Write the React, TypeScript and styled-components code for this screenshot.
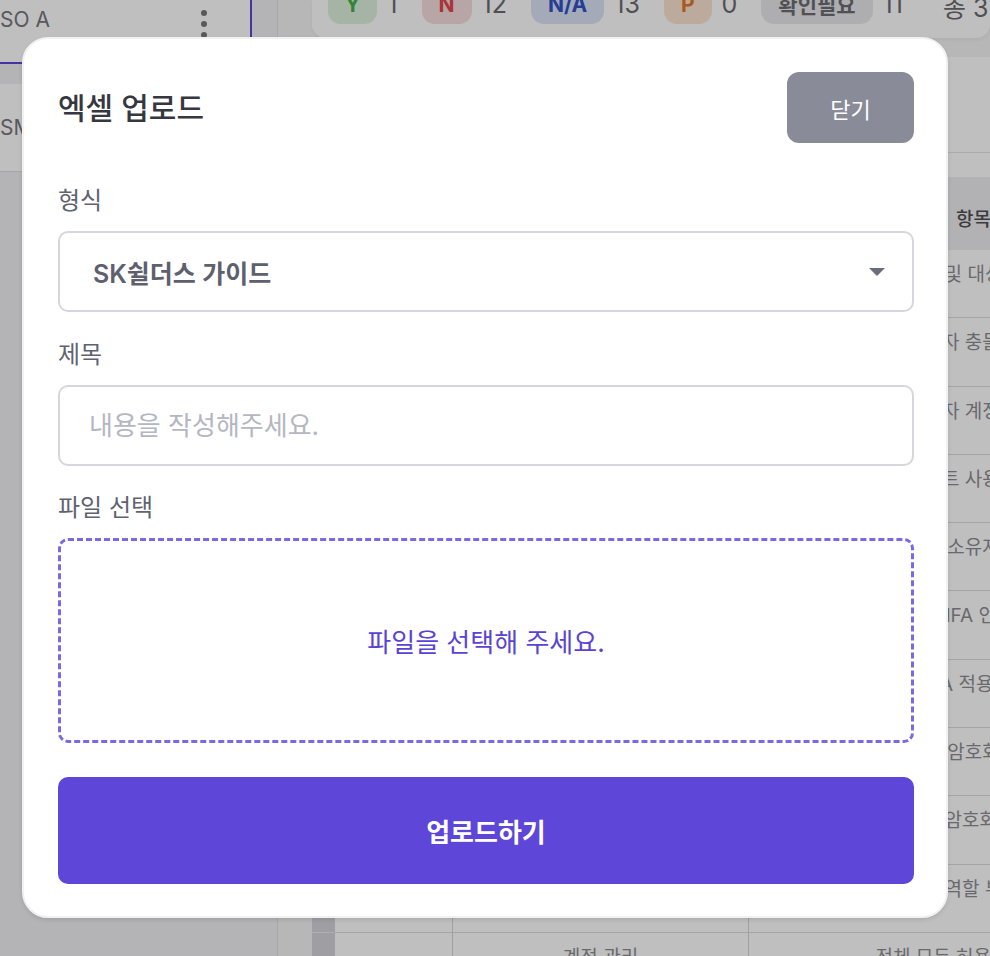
import React from "react";
import styled, { createGlobalStyle } from "styled-components";

const GlobalStyle = createGlobalStyle`
  html, body { margin: 0; padding: 0; background: #f5f5f5; }
  * { box-sizing: border-box; }
  body { font-family: "Inter", "Noto Sans CJK KR", "Noto Sans", sans-serif; }
`;

const FONT = `"Inter", "Noto Sans CJK KR", "Noto Sans", sans-serif`;

const Page = styled.div`
  position: relative;
  width: 990px;
  height: 956px;
  overflow: hidden;
  display: grid;
  grid-template-columns: 278px 1fr;
  background: #f5f5f5;
  font-family: ${FONT};
`;

/* ---------- background app ---------- */
const Sidebar = styled.aside`
  background: #f0f0f3;
  border-right: 1px solid #e0e0e2;
  display: flex;
  flex-direction: column;
  gap: 20px;
`;

const SideItem = styled.div<{ $selected?: boolean; $h: number }>`
  width: 252px;
  height: ${(p) => p.$h}px;
  background: #fff;
  display: flex;
  justify-content: space-between;
  align-items: ${(p) => (p.$selected ? "flex-start" : "center")};
  padding: ${(p) => (p.$selected ? "7px 43px 0 0" : "0 43px 0 0")};
  border-right: ${(p) => (p.$selected ? "2px solid #5b45d8" : "none")};
  border-bottom: ${(p) => (p.$selected ? "2px solid #5b45d8" : "1px solid #dcdcdf")};
  font-size: 21px;
  line-height: 26px;
  color: #77777c;
`;

const Kebab = styled.div`
  display: flex;
  flex-direction: column;
  gap: 5px;
  padding-top: 3px;
  span {
    width: 6px;
    height: 6px;
    border-radius: 50%;
    background: #76767c;
  }
`;

const Main = styled.main`
  display: flex;
  flex-direction: column;
  padding-left: 34px;
  min-width: 0;
`;

const Toolbar = styled.div`
  height: 38px;
  background: #fff;
  border-radius: 0 0 14px 14px;
  display: flex;
  align-items: flex-end;
  gap: 24px;
  padding: 0 0 14px 16px;
  white-space: nowrap;
  box-shadow: 0 2px 4px rgba(0, 0, 0, 0.05);
`;

const Stat = styled.div`
  display: flex;
  align-items: center;
  gap: 10px;
  font-size: 25px;
  color: #6b6b70;
`;

const Badge = styled.span<{ $bg: string; $fg: string }>`
  height: 40px;
  padding: 0 17px;
  border-radius: 13px;
  display: inline-flex;
  align-items: center;
  background: ${(p) => p.$bg};
  color: ${(p) => p.$fg};
  font-weight: 700;
  font-size: 21px;
`;

const Divider = styled.span`
  width: 2px;
  height: 30px;
  background: #dedee2;
  align-self: center;
  margin: -8px -8px 0 0;
`;

const Panel = styled.div`
  margin-top: 19px;
  flex: 1;
  background: #fff;
  display: flex;
  flex-direction: column;
`;

const FilterArea = styled.div`
  height: 96px;
  border-bottom: 1px solid #e4e4e8;
  margin-bottom: 24px;
`;

const Table = styled.div`
  display: grid;
  grid-template-columns: 23px 118px 296px 450px;
  margin-left: -34px;
  padding-left: 34px;
`;

const HeadCell = styled.div`
  height: 73px;
  background: #eeeef0;
  border-right: 1px solid #dcdce0;
  display: flex;
  align-items: center;
  justify-content: center;
  font-size: 19px;
  font-weight: 500;
  color: #505055;
  white-space: nowrap;
  padding-top: 8px;
`;

const Cell = styled.div<{ $strip?: boolean }>`
  height: 68.3px;
  border-bottom: 1px solid #dcdce0;
  border-right: 1px solid #d6d6da;
  background: ${(p) => (p.$strip ? "#d5d5da" : "#fff")};
  border-bottom-color: ${(p) => (p.$strip ? "#e8e8ec" : "#dcdce0")};
  display: flex;
  justify-content: center;
  align-items: flex-start;
  padding-top: 12px;
  font-size: 19px;
  line-height: 26px;
  color: #8d8d92;
  white-space: nowrap;
  overflow: hidden;
`;

const Overlay = styled.div`
  position: absolute;
  inset: 0;
  background: rgba(0, 0, 0, 0.25);
`;

/* ---------- modal ---------- */
const Modal = styled.div`
  position: absolute;
  left: 22px;
  top: 37px;
  width: 926px;
  height: 881px;
  background: #fff;
  border: 2px solid #f1f1f3;
  border-radius: 26px;
  padding: 33px 32px 32px 34px;
  display: flex;
  flex-direction: column;
  box-shadow: 0 2px 4px rgba(0, 0, 0, 0.1);
  font-family: ${FONT};
`;

const Header = styled.div`
  height: 71px;
  display: flex;
  align-items: center;
  justify-content: space-between;
  margin-bottom: 44px;
`;

const Title = styled.h2`
  margin: 0 0 3px;
  font-size: 30px;
  font-weight: 500;
  color: #36373f;
`;

const CloseButton = styled.button`
  width: 127px;
  height: 71px;
  border: none;
  border-radius: 12px;
  background: #8a8b98;
  color: #fff;
  font-family: ${FONT};
  font-size: 22px;
`;

const FieldGroup = styled.div<{ $gap: number }>`
  display: flex;
  flex-direction: column;
  margin-bottom: ${(p) => p.$gap}px;
`;

const Label = styled.label`
  font-size: 24px;
  line-height: 28px;
  color: #5f6270;
  margin-bottom: 16px;
`;

const SelectBox = styled.div`
  height: 81px;
  border: 2px solid #d6d6de;
  border-radius: 10px;
  display: flex;
  align-items: center;
  justify-content: space-between;
  padding: 0 27px 0 33px;
  font-size: 25px;
  font-weight: 600;
  color: #5e606e;
`;

const Caret = styled.span`
  width: 0;
  height: 0;
  border-left: 8px solid transparent;
  border-right: 8px solid transparent;
  border-top: 8px solid #6c6d7b;
`;

const TextInput = styled.input`
  height: 81px;
  border: 2px solid #d6d6de;
  border-radius: 10px;
  padding: 0 29px;
  font-family: ${FONT};
  font-size: 26px;
  color: #333;
  outline: none;
  &::placeholder {
    color: #b4b6c2;
  }
`;

const DropZone = styled.div`
  height: 205px;
  border: 3px dashed #7c68e2;
  border-radius: 10px;
  display: flex;
  align-items: center;
  justify-content: center;
  font-size: 26px;
  color: #5a43d4;
  margin-bottom: 34px;
`;

const SubmitButton = styled.button`
  height: 107px;
  border: none;
  border-radius: 10px;
  background: #5d46d8;
  color: #fff;
  font-family: ${FONT};
  font-size: 26px;
  font-weight: 600;
`;

const rows = [
  "계정 및 대상 관리",
  "관리자 충돌 검토",
  "사용자 계정 관리",
  "리포트 사용 관리",
  "자산 소유자 지정",
  "중요 MFA 인증 적용",
  "MFA 적용 점검",
  "전송 구간 암호화 적용 여부",
  "중요정보 암호화 저장 여부",
  "계정별 역할 부여 관리",
  "전체 모두 허용 정책 점검",
];

export default function App() {
  return (
    <>
      <GlobalStyle />
      <Page>
        <Sidebar>
          <SideItem $selected $h={64}>
            <span>SO A</span>
            <Kebab>
              <span />
              <span />
              <span />
            </Kebab>
          </SideItem>
          <SideItem $h={88}>
            <span>SM</span>
          </SideItem>
        </Sidebar>
        <Main>
          <Toolbar>
            <Stat>
              <Badge $bg="#dcf0dc" $fg="#43b049">Y</Badge>1
            </Stat>
            <Stat>
              <Badge $bg="#f6dcdc" $fg="#e0474c">N</Badge>12
            </Stat>
            <Stat>
              <Badge $bg="#dde3f6" $fg="#3152c8">N/A</Badge>13
            </Stat>
            <Stat>
              <Badge $bg="#fbe4d2" $fg="#e07a26">P</Badge>0
            </Stat>
            <Stat>
              <Badge $bg="#e9e9ec" $fg="#6d6d72">확인필요</Badge>11
            </Stat>
            <Divider />
            <Stat>총 37</Stat>
          </Toolbar>
          <Panel>
            <FilterArea />
            <Table>
              <HeadCell />
              <HeadCell>No</HeadCell>
              <HeadCell>분류</HeadCell>
              <HeadCell>항목</HeadCell>
              {rows.map((r, i) => (
                <React.Fragment key={i}>
                  <Cell $strip />
                  <Cell />
                  <Cell>{i === rows.length - 1 ? "계정 관리" : ""}</Cell>
                  <Cell>{r}</Cell>
                </React.Fragment>
              ))}
            </Table>
          </Panel>
        </Main>
        <Overlay />
        <Modal>
          <Header>
            <Title>엑셀 업로드</Title>
            <CloseButton>닫기</CloseButton>
          </Header>
          <FieldGroup $gap={29}>
            <Label>형식</Label>
            <SelectBox>
              <span>SK쉴더스 가이드</span>
              <Caret />
            </SelectBox>
          </FieldGroup>
          <FieldGroup $gap={28}>
            <Label>제목</Label>
            <TextInput placeholder="내용을 작성해주세요." />
          </FieldGroup>
          <FieldGroup $gap={0}>
            <Label>파일 선택</Label>
            <DropZone>파일을 선택해 주세요.</DropZone>
          </FieldGroup>
          <SubmitButton>업로드하기</SubmitButton>
        </Modal>
      </Page>
    </>
  );
}
